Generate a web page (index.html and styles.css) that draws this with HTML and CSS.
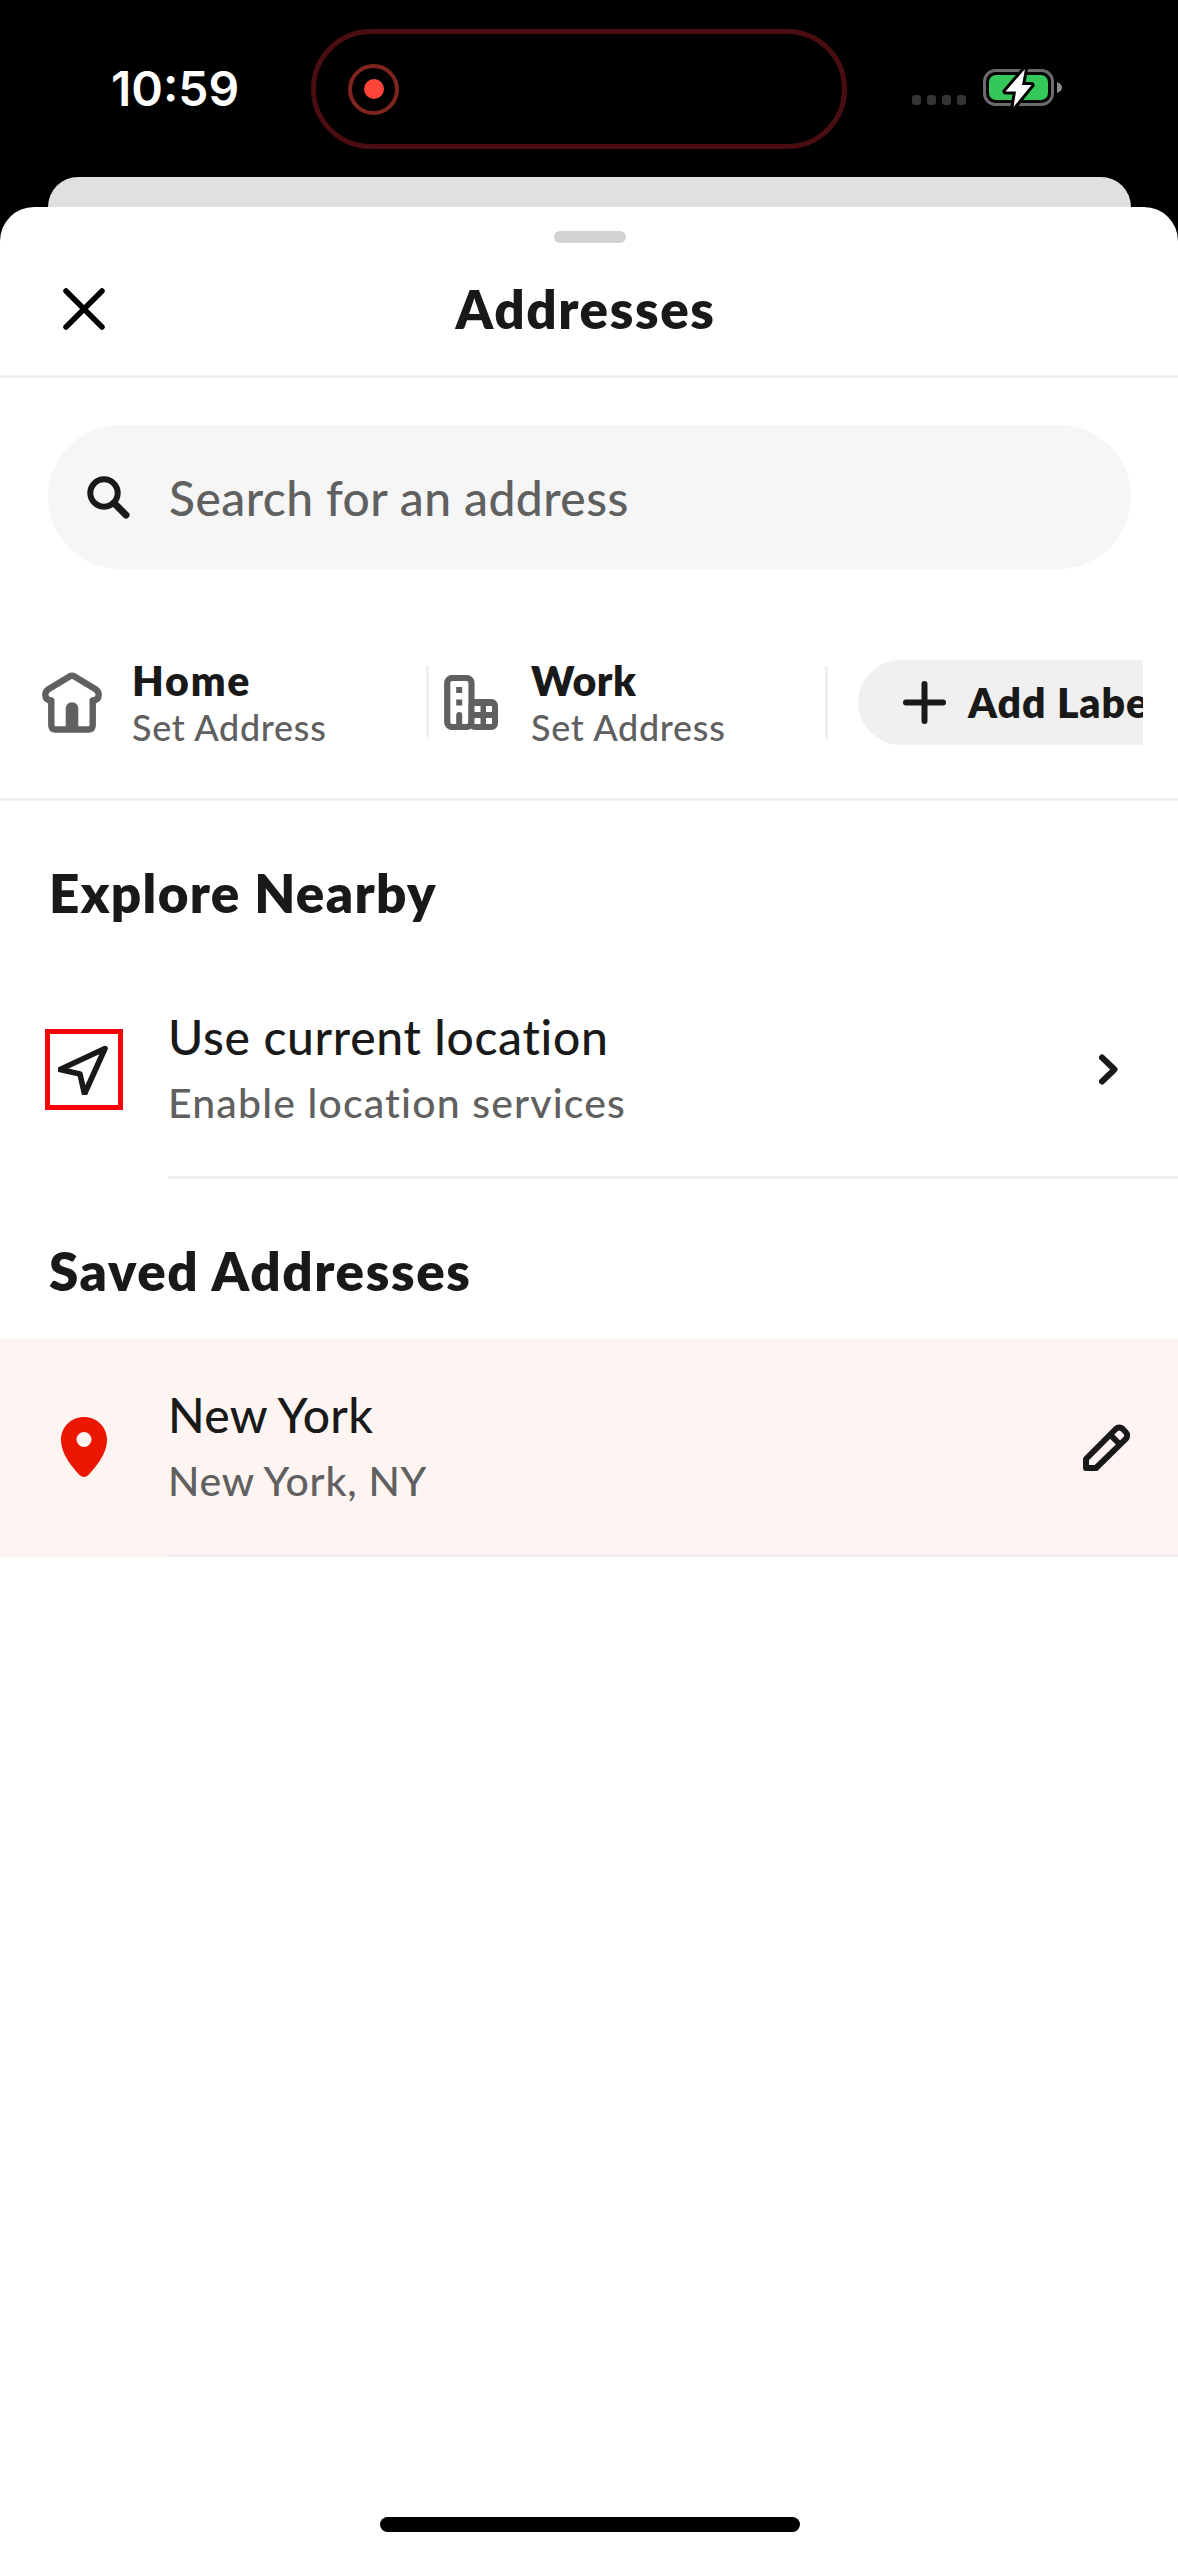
FILE: index.html
```html
<!DOCTYPE html>
<html lang="en">
<head>
<meta charset="utf-8">
<title>Addresses</title>
<link rel="stylesheet" href="styles.css">
</head>
<body>
<div class="status">
  <div class="time">10:59</div>
  <div class="island"><div class="record"><i></i></div></div>
  <div class="indicators">
    <div class="signal"><i></i><i></i><i></i><i></i></div>
    <svg class="battery" width="79" height="44" viewBox="0 0 79 44">
      <rect x="1.5" y="4.5" width="68" height="34" rx="11" fill="none" stroke="#6b6a6e" stroke-width="3"/>
      <path d="M74 16q5 2 5 5.500t-5 5.500z" fill="#8a8a8a"/>
      <rect x="6" y="9" width="59" height="25" rx="7" fill="#34c759"/>
      <path d="M42 3L22.500 25.500H33L30.500 41L48.500 19H39z" fill="#fff" stroke="#000" stroke-width="6" stroke-linejoin="round" paint-order="stroke"/>
    </svg>
  </div>
</div>
<div class="back-card"></div>
<main class="sheet">
  <header class="header">
    <div class="handle"></div>
    <div class="title-row">
      <svg class="close" width="42" height="42" viewBox="0 0 42 42"><path d="M3 3L39 39M39 3L3 39" fill="none" stroke="#000" stroke-width="5.500" stroke-linecap="round"/></svg>
      <h1>Addresses</h1>
    </div>
  </header>
  <div class="search">
    <svg width="43" height="43" viewBox="0 0 43 43"><g fill="none" stroke="#191919" stroke-width="6"><circle cx="17" cy="17" r="13.700"/><path d="M27 27L39 39" stroke-width="7" stroke-linecap="round"/></g></svg>
    <span>Search for an address</span>
  </div>
  <div class="labels">
    <div class="label">
      <div class="label-icon">
        <svg width="60" height="61" viewBox="0 0 60 61"><path d="M27.500 4.500Q30 3 32.500 4.500L54 17.500Q56.700 19.500 56.700 23Q56.500 28 50.700 28.500V53Q50.700 57.500 46.500 57.500H13.500Q9.300 57.500 9.300 53V28.500Q3.500 28 3.300 23Q3.300 19.500 6 17.500Z" fill="none" stroke="#606060" stroke-width="6.400" stroke-linejoin="round"/><path d="M23.700 58V36.500a6.300 6.300 0 0 1 12.600 0V58z" fill="#606060"/></svg>
      </div>
      <div class="label-text"><b class="home">Home</b><span>Set Address</span></div>
    </div>
    <div class="divider"></div>
    <div class="label">
      <div class="label-icon">
        <svg width="54" height="55" viewBox="0 0 54 55"><rect x="3.200" y="3" width="24.300" height="49" rx="5" fill="none" stroke="#606060" stroke-width="6.200"/><rect x="24.500" y="24" width="29.500" height="31" rx="6.500" fill="#606060"/><path fill="#606060" d="M12.200 12h6v6h-6zM12.200 24.500h6v6h-6zM12.200 50V40a3 3 0 0 1 6 0V50z"/><path fill="#fff" d="M30.500 31h6v6h-6zM42 31h6v6h-6zM30.500 43h6v6h-6zM42 43h6v6h-6z"/></svg>
      </div>
      <div class="label-text"><b>Work</b><span>Set Address</span></div>
    </div>
    <div class="divider"></div>
    <div class="add">
      <svg width="43" height="43" viewBox="0 0 43 43"><path d="M21.500 3V40M3 21.500H40" fill="none" stroke="#191919" stroke-width="6" stroke-linecap="round"/></svg>
      <b>Add Label</b>
    </div>
  </div>
  <section>
    <h2 class="explore">Explore Nearby</h2>
    <div class="row">
      <div class="lead"><div class="highlight"><svg width="52" height="52" viewBox="1 -2.500 52 52"><path d="M48 3L3 24L23 28.500L27.500 48.500Z" fill="none" stroke="#191919" stroke-width="5.600" stroke-linejoin="round"/></svg></div></div>
      <div class="body">
        <div class="text"><p class="current">Use current location</p><small class="enable">Enable location services</small></div>
        <svg class="trail" width="60" height="60" viewBox="0 0 60 60"><path d="M24 18.500L36.500 30.500L24 42.500" fill="none" stroke="#191919" stroke-width="6" stroke-linecap="round" stroke-linejoin="round"/></svg>
      </div>
    </div>
  </section>
  <section>
    <h2>Saved Addresses</h2>
    <div class="row selected">
      <div class="lead"><svg width="46" height="61" viewBox="0 0 46 61"><path fill="#eb1700" fill-rule="evenodd" d="M23 0C10 0 0 10 0 23C0 37 12 51 18.500 58Q23 62 27.500 58C34 51 46 37 46 23C46 10 36 0 23 0zM23 15a7.500 7.500 0 1 1 0 15a7.500 7.500 0 1 1 0-15z"/></svg></div>
      <div class="body">
        <div class="text"><p>New York</p><small>New York, NY</small></div>
        <svg class="trail" width="60" height="60" viewBox="-5 -7 60 60"><path d="M3 35L32.800 5a5 5 0 0 1 7 0L42.700 8a5 5 0 0 1 0 7L13 44H3ZM27 10.500L37 20.500" fill="none" stroke="#191919" stroke-width="6" stroke-linejoin="round"/></svg>
      </div>
    </div>
  </section>
  <div class="home-bar"></div>
</main>
</body>
</html>
```
FILE: styles.css
```css
* { box-sizing: border-box; }
body {
  margin: 0;
  width: 1178px;
  height: 2556px;
  display: flex;
  flex-direction: column;
  background: #000;
  color: #191919;
  font-family: Lato, "Open Sans", sans-serif;
  font-variant-ligatures: none;
}
svg { display: block; flex: none; }
h1, h2, p { margin: 0; }

.status {
  height: 177px;
  flex: none;
  display: grid;
  grid-template-columns: 311px 536px 1fr;
}
.time {
  padding: 60px 0 0 111px;
  color: #fff;
  font: 600 48px/58px Inter, sans-serif;
}
.island {
  margin-top: 29px;
  height: 120px;
  padding-left: 32px;
  border: 5px solid #4b0e10;
  border-radius: 60px;
  display: flex;
  align-items: center;
}
.record {
  width: 51px;
  height: 51px;
  border: 4px solid #7f241f;
  border-radius: 50%;
  display: grid;
  place-items: center;
}
.record i { width: 20px; height: 20px; border-radius: 50%; background: #ff453a; }
.indicators { display: flex; align-items: flex-start; padding: 66px 0 0 65px; gap: 17px; }
.signal { display: flex; gap: 5.700px; padding-top: 29px; }
.signal i { width: 9.300px; height: 10px; border-radius: 3px; background: #343434; }

.back-card {
  height: 30px;
  flex: none;
  margin: 0 47px 0 48px;
  border-radius: 30px 30px 0 0;
  background: #e0e0e0;
}
.sheet {
  flex: 1;
  display: flex;
  flex-direction: column;
  background: #fff;
  border-radius: 34px 34px 0 0;
}
.header { padding-top: 24px; border-bottom: 3px solid #f0f0f0; }
.handle { width: 72px; height: 12px; margin: 0 auto 0 554px; border-radius: 6px; background: #d3d3d3; }
.title-row {
  height: 132px;
  padding: 0 70px 0 63px;
  display: grid;
  grid-template-columns: 42px 1fr 42px;
  align-items: center;
}
h1, h2 { font-weight: 800; font-size: 53px; line-height: 64px; letter-spacing: 1.600px; }
h1 { text-align: center; }
h2 { padding: 60px 0 36px 49px; }
.explore { letter-spacing: 1.300px; }

.search {
  height: 144px;
  margin: 47px 47px 0 48px;
  padding-left: 39px;
  display: flex;
  align-items: center;
  gap: 39px;
  border-radius: 72px;
  background: #f6f6f6;
  color: #606060;
  font-size: 48px;
  font-weight: 500;
  letter-spacing: 0.420px;
}
.labels {
  height: 92px;
  margin: 87px 35px 50px 0;
  padding-left: 30px;
  display: flex;
  align-items: center;
  overflow: hidden;
}
.label { width: 396px; flex: none; display: flex; align-items: center; gap: 18px; }
.label-icon { width: 84px; display: flex; justify-content: center; }
.label-text { display: flex; flex-direction: column; gap: 2px; padding-top: 2px; white-space: nowrap; }
.label b, .add b { font-size: 41px; line-height: 47px; font-weight: 800; letter-spacing: 0.500px; }
.add b { letter-spacing: 0.900px; }
.label .home { letter-spacing: 1.800px; }
.label span { font-size: 36px; line-height: 43px; font-weight: 500; letter-spacing: 0.700px; color: #606060; }
.divider { width: 3px; height: 73px; flex: none; background: #f0f0f0; }
.add {
  flex: none;
  width: 340px;
  height: 85px;
  margin-left: 30px;
  padding-left: 45px;
  display: flex;
  align-items: center;
  gap: 22px;
  border-radius: 43px;
  background: #f0f0f0;
  white-space: nowrap;
}
section { border-top: 0 solid #f0f0f0; }
.labels + section { border-top-width: 3px; }

.row { display: flex; height: 218px; }
.selected { background: #fef5f3; }
.lead { width: 168px; height: 216px; flex: none; display: flex; align-items: center; justify-content: center; }
.highlight {
  width: 78px;
  height: 81px;
  border: 5px solid #fb0007;
  display: grid;
  place-items: center;
}
.body {
  flex: 1;
  display: flex;
  justify-content: space-between;
  border-bottom: 3px solid #f0f0f0;
}
.selected .body { border-color: #f5edef; }
.text { padding-top: 47px; font-weight: 500; }
.text p { font-size: 48px; line-height: 58px; margin-bottom: 12px; letter-spacing: 0.300px; }
.text .current { letter-spacing: 0.680px; }
.text small { display: block; font-size: 41px; line-height: 50px; letter-spacing: 0.750px; color: #606060; }
.text .enable { letter-spacing: 1.150px; }
.trail { align-self: center; margin-right: 40px; }
.home-bar {
  width: 420px;
  height: 15px;
  margin: auto auto 24px 380px;
  border-radius: 8px;
  background: #000;
}
```
